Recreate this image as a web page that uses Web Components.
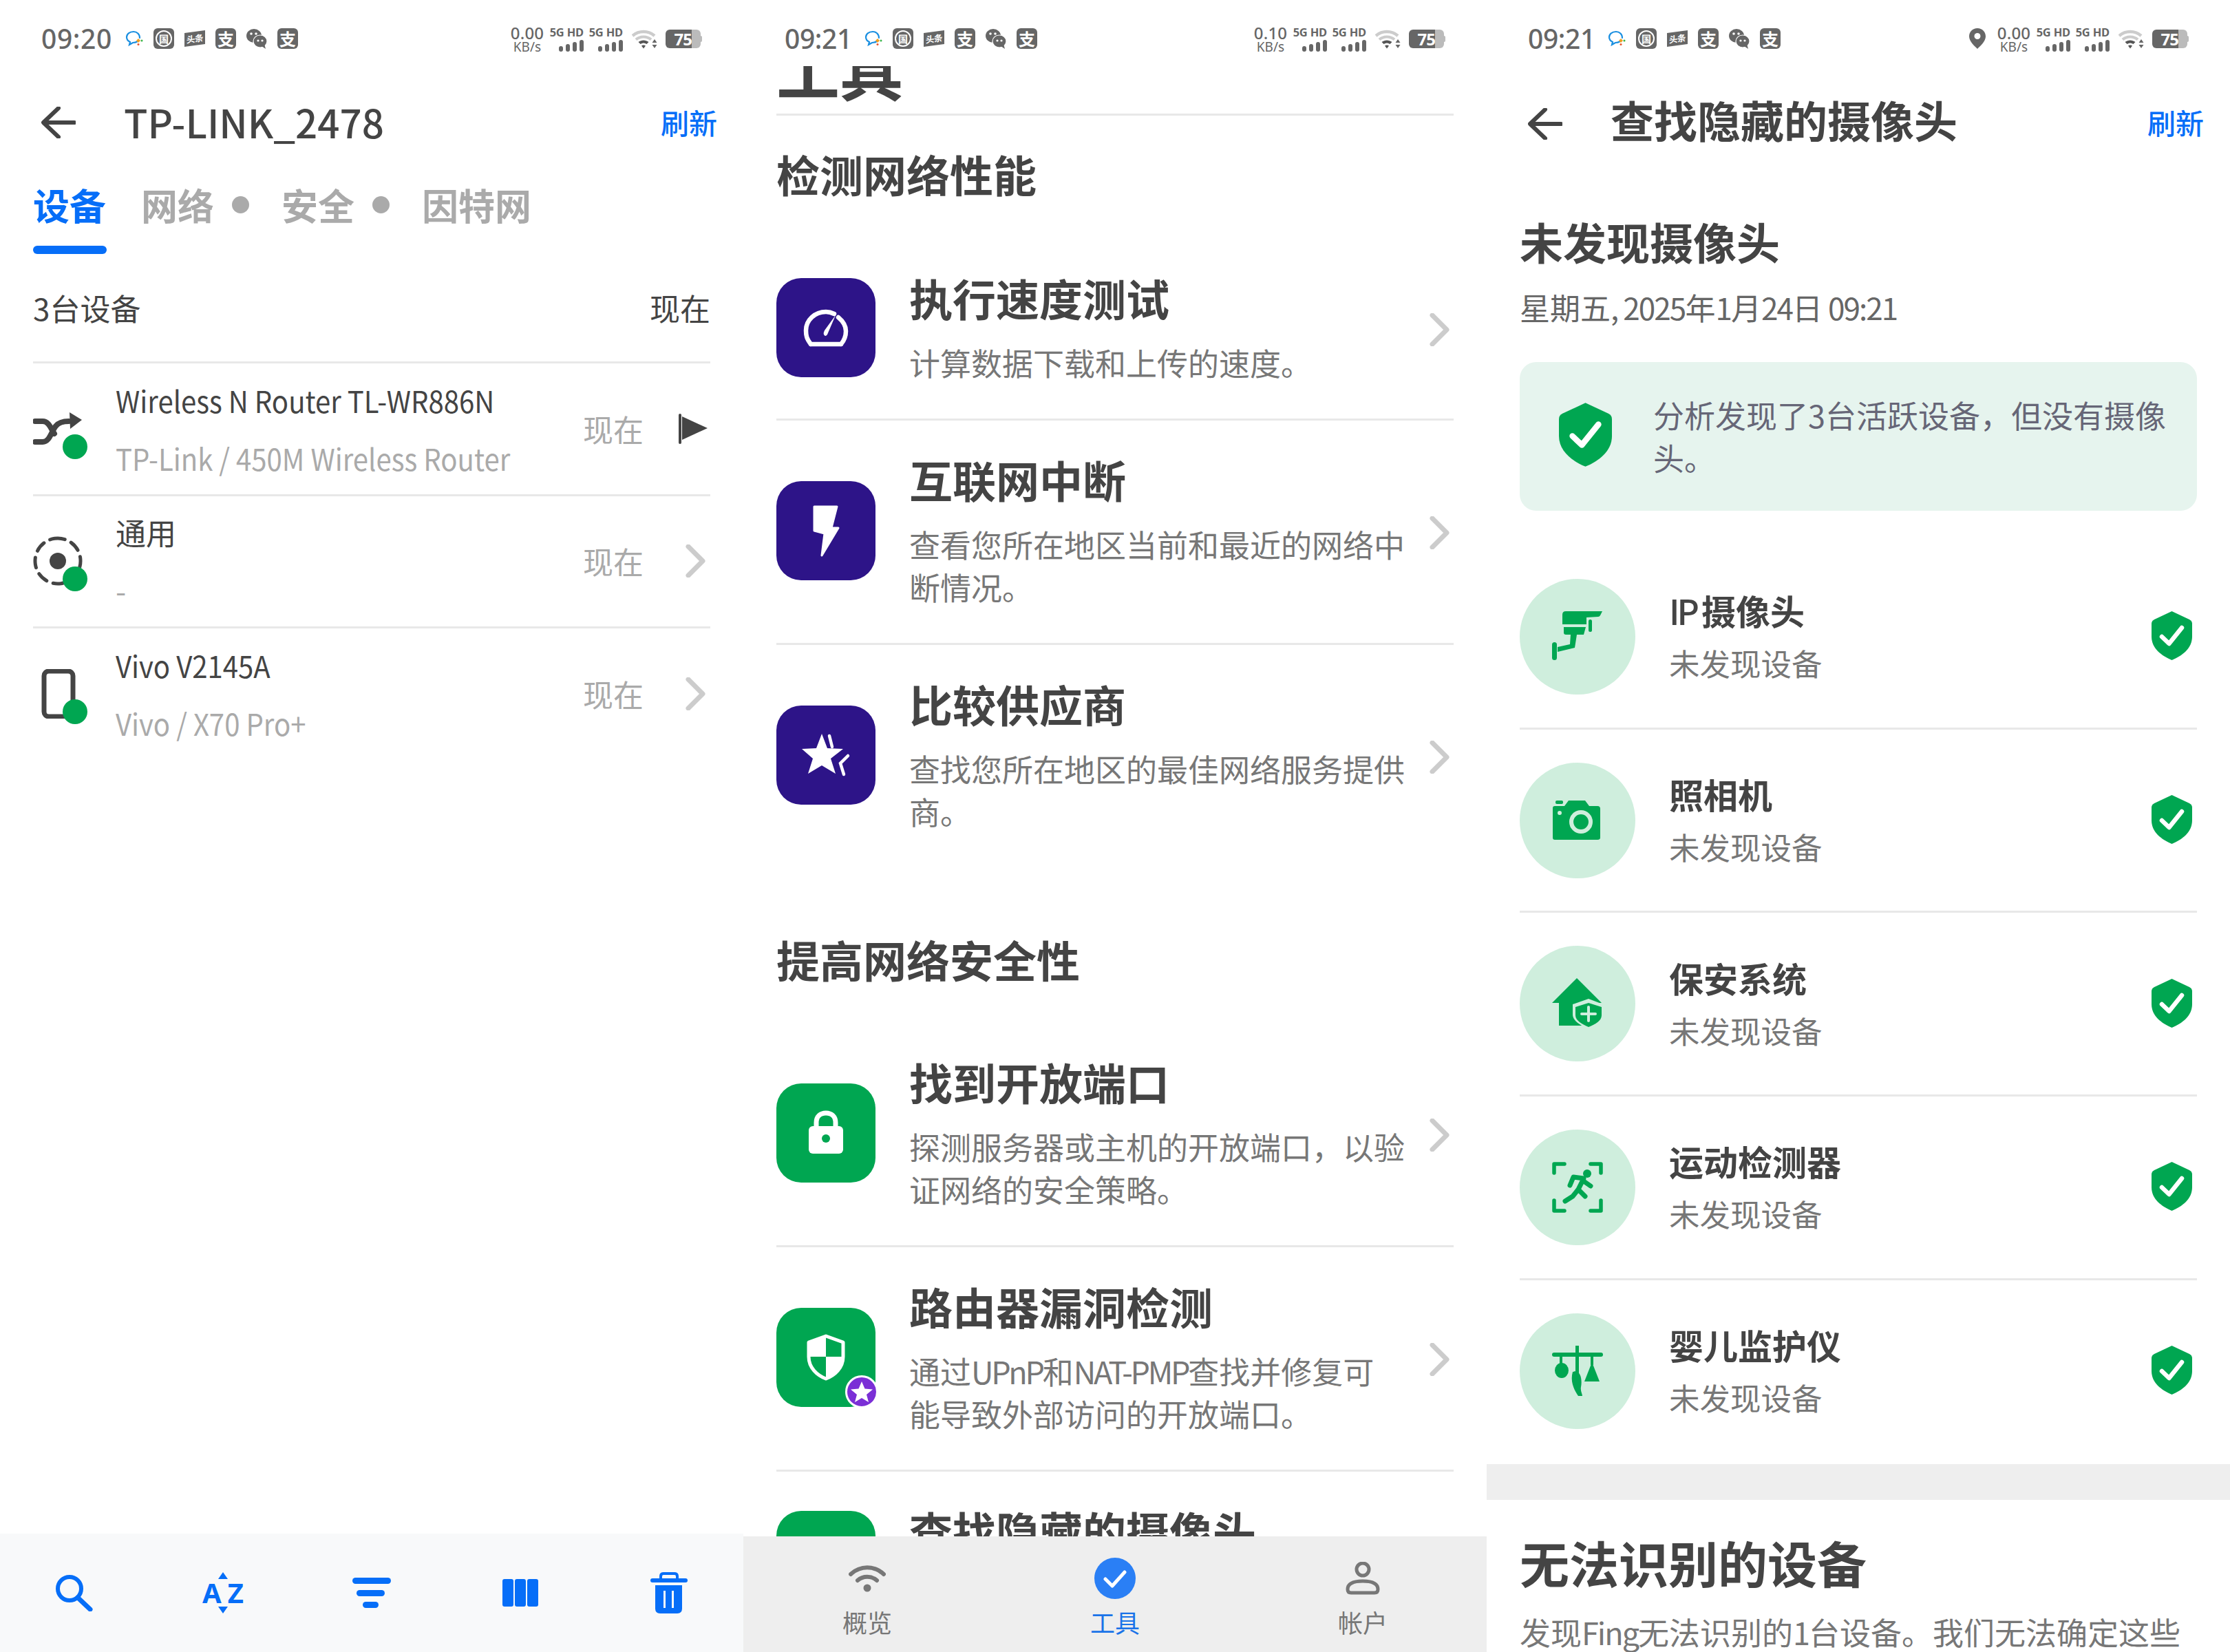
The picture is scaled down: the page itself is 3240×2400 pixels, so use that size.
<!DOCTYPE html>
<html lang="zh">
<head>
<meta charset="utf-8">
<title>Fing</title>
<style>
html,body{margin:0;padding:0;background:#fff}
body{width:3240px;height:2400px;overflow:hidden;display:grid;grid-template-columns:repeat(3,1080px);font-family:"Noto Sans CJK SC","Noto Sans",sans-serif;color:#444}
svg{display:block}
.la{letter-spacing:-3.3px}
.fi{letter-spacing:-2px}
</style>
</head>
<body>

<phone-panel>
  <status-bar time="09:20" speed="0.00"></status-bar>
  <app-header action="刷新">TP-LINK_2478</app-header>
  <device-tabs></device-tabs>
  <summary-row><span>3台设备</span><span slot="end">现在</span></summary-row>
  <device-row latin kind="shuffle" trail="flag" sub="TP-Link / 450M Wireless Router">Wireless N Router TL-WR886N</device-row>
  <device-row kind="ring" sub="-">通用</device-row>
  <device-row latin kind="phone" sub="Vivo / X70 Pro+">Vivo V2145A</device-row>
  <flex-fill></flex-fill>
  <list-toolbar></list-toolbar>
</phone-panel>

<phone-panel>
  <status-bar time="09:21" speed="0.10"></status-bar>
  <scroll-clip>
    <page-title>工具</page-title>
    <section-title>检测网络性能</section-title>
    <tool-row first kind="gauge" color="#2d1488" heading="执行速度测试">计算数据下载和上传的速度。</tool-row>
    <tool-row kind="bolt" color="#2d1488" heading="互联网中断">查看您所在地区当前和最近的网络中断情况。</tool-row>
    <tool-row kind="star" color="#2d1488" heading="比较供应商">查找您所在地区的最佳网络服务提供商。</tool-row>
    <section-title second>提高网络安全性</section-title>
    <tool-row first kind="lock" color="#00a651" heading="找到开放端口">探测服务器或主机的开放端口&#xFF0C;以验证网络的安全策略。</tool-row>
    <tool-row kind="shield" badge color="#00a651" heading="路由器漏洞检测">通过<span class="la">UPnP</span>和<span class="la">NAT-PMP</span>查找并修复可<br>能导致外部访问的开放端口。</tool-row>
    <tool-row kind="none" color="#00a651" heading="查找隐藏的摄像头">扫描网络中的隐藏摄像头。</tool-row>
  </scroll-clip>
  <main-nav></main-nav>
</phone-panel>

<phone-panel>
  <status-bar time="09:21" speed="0.00" pin></status-bar>
  <app-header action="刷新" strong>查找隐藏的摄像头</app-header>
  <result-head date="星期五<span class='l'>, 2025</span>年<span class='l'>1</span>月<span class='l'>24</span>日<span class='l'> 09:21</span>">未发现摄像头</result-head>
  <result-card>分析发现了3台活跃设备&#xFF0C;但没有摄像头。</result-card>
  <cam-row first kind="cctv" heading="<span class='l'>IP </span>摄像头">未发现设备</cam-row>
  <cam-row kind="camera" heading="照相机">未发现设备</cam-row>
  <cam-row kind="house" heading="保安系统">未发现设备</cam-row>
  <cam-row kind="runner" heading="运动检测器">未发现设备</cam-row>
  <cam-row kind="mobile" heading="婴儿监护仪">未发现设备</cam-row>
  <gray-band></gray-band>
  <unknown-devices heading="无法识别的设备">发现<span class="fi">Fing</span>无法识别的<span class="fi">1</span>台设备。我们无法确定这些</unknown-devices>
</phone-panel>

<script>
const FONT = '"Noto Sans CJK SC","Noto Sans",sans-serif';
const BLUE = '#066ef8', GREEN = '#00a651';
const SHIELD = (w,h)=>`<svg width="${w}" height="${h}" viewBox="0 0 59 71"><path d="M29.5 0 L55 12 Q59 14 59 18 V37 C59 54 44 65 29.5 71 C15 65 0 54 0 37 V18 Q0 14 4 12 Z" fill="${GREEN}"/><path d="M15 37 L25.5 47 L44 24" fill="none" stroke="#fff" stroke-width="6.5" stroke-linecap="round" stroke-linejoin="round"/></svg>`;
const CHEVRON = `<svg width="30" height="48" viewBox="0 0 30 48"><path d="M4 3 L25 24 L4 45" fill="none" stroke="#ccc" stroke-width="7" stroke-linecap="round" stroke-linejoin="round"/></svg>`;

function define(name, css, render){
  customElements.define(name, class extends HTMLElement{
    constructor(){
      super();
      this.attachShadow({mode:'open'});
    }
    connectedCallback(){
      this.shadowRoot.innerHTML = `<style>${css}</style>` + render(this);
    }
  });
}

define('phone-panel', `:host{display:flex;flex-direction:column;width:1080px;height:2400px;overflow:hidden;background:#fff;font-family:${FONT};color:#444}`, ()=>`<slot></slot>`);
define('flex-fill', `:host{display:block;flex:1}`, ()=>``);
define('gray-band', `:host{display:block;height:52px;background:#eee;margin-top:4px;flex:none}`, ()=>``);

/* status bar */
const BARS = `<svg width="36" height="17" viewBox="0 0 36 17" fill="#666"><rect x="0" y="9" width="6" height="8" rx="3"/><rect x="10" y="6" width="6" height="11" rx="3"/><rect x="20" y="3" width="6" height="14" rx="3"/><rect x="30" y="0" width="6" height="17" rx="3"/></svg>`;
define('status-bar', `
:host{display:flex;align-items:center;height:96px;flex:none;padding:16px 60px 0 60px;box-sizing:border-box;background:#fff;color:#666;position:relative;z-index:2}
.wrap{display:flex;align-items:center;height:40px}
.time{font:500 39px/40px "Noto Sans",sans-serif;margin-right:20px;letter-spacing:.6px;width:102px;white-space:nowrap}
.time.n{width:95px;margin-right:21px;letter-spacing:-.4px}
.icons{display:flex;align-items:center;gap:15px}
.b{width:30px;height:30px;border-radius:6px;background:#666;color:#fff;display:flex;align-items:center;justify-content:center;font:700 24px/1 ${FONT}}
.ring{width:24px;height:24px;border:2.5px solid #fff;border-radius:50%;display:flex;align-items:center;justify-content:center;font:700 14px/1 ${FONT};box-sizing:border-box}
.tt{width:30px;height:20px;background:#666;color:#fff;font:700 12.5px/20px ${FONT};text-align:center;transform:skewY(-8deg);letter-spacing:-.5px;white-space:nowrap;overflow:hidden}
.right{margin-left:auto;display:flex;align-items:center;height:44px}
.speed{display:flex;flex-direction:column;align-items:center;width:50px;color:#666;font-family:"Noto Sans",sans-serif}
.speed b{font-weight:500;font-size:24px;line-height:23px;letter-spacing:.2px}
.speed i{font-style:normal;font-size:19px;line-height:18px}
.sim{display:flex;flex-direction:column;align-items:flex-end;width:47px;margin-left:10px;font:700 16.5px/17px "Noto Sans",sans-serif;color:#666;white-space:nowrap;gap:3px;letter-spacing:-.2px}
.pin{margin-right:16px}
.wifi{margin-left:13px}
.bat{margin-left:12px;display:flex;align-items:center}
.bat .body{width:38px;height:27px;border-radius:6px 0 0 6px;background:#666;color:#fff;font:700 24px/27px "Noto Sans",sans-serif;letter-spacing:-1px;text-align:right;white-space:nowrap}
.bat .rest{width:13px;height:27px;background:#bbb;border-radius:0 6px 6px 0}
.bat .nub{width:2px;height:9px;background:#bbb;border-radius:0 2px 2px 0}
`, el=>{
  const t = el.getAttribute('time'), narrow = t.endsWith('1');
  return `<div class="wrap"><span class="time ${narrow?'n':''}">${t}</span><div class="icons">
    <svg width="26" height="24" viewBox="0 0 26 24"><path d="M12 2C6 2 2 5.500 2 10c0 3 2 5.500 5 7l-1 4 5-3c2 0 4 0 6-1.500M21 11C21 5.500 17 2 12 2" fill="none" stroke="#1a8fe0" stroke-width="2.200" stroke-linecap="round"/><path d="M19 12l3 3-3 3-3-3z" fill="#f0a020"/><circle cx="24" cy="15" r="1.500" fill="#39b54a"/><circle cx="19" cy="20.500" r="1.500" fill="#e8552d"/></svg>
    <span class="b"><span class="ring">国</span></span>
    <span class="tt">头条</span>
    <span class="b">支</span>
    <svg width="30" height="30" viewBox="0 0 30 30"><ellipse cx="11" cy="11" rx="11" ry="10" fill="#666"/><ellipse cx="20" cy="19" rx="10" ry="9" fill="#666" stroke="#fff" stroke-width="1.200"/><path d="M22 26l6 4-2-7z" fill="#666"/><circle cx="7" cy="8" r="1.800" fill="#fff"/><circle cx="14" cy="8" r="1.800" fill="#fff"/><circle cx="17" cy="18" r="1.600" fill="#fff"/><circle cx="23" cy="18" r="1.600" fill="#fff"/></svg>
    <span class="b">支</span>
  </div></div>
  <div class="right">
    ${el.hasAttribute('pin')?`<svg class="pin" width="24" height="30" viewBox="0 0 24 30"><path d="M12 0C5 0 0 5 0 12c0 7 8 14 12 18 4-4 12-11 12-18C24 5 19 0 12 0z" fill="#666"/><circle cx="12" cy="11.500" r="4.500" fill="#fff"/></svg>`:''}
    <div class="speed"><b>${el.getAttribute('speed')}</b><i>KB/s</i></div>
    <div class="sim"><span>5G HD</span>${BARS}</div>
    <div class="sim"><span>5G HD</span>${BARS}</div>
    <svg class="wifi" width="37" height="29" viewBox="0 0 37 29"><path d="M1 10C10 2 24 2 33 10" fill="none" stroke="#ccc" stroke-width="4.500"/><path d="M6 15.500C12 10 22 10 28 15.500" fill="none" stroke="#ccc" stroke-width="4"/><path d="M9.500 19C14 15.500 20 15.500 24.500 19l-3 3c-3-2-6-2-9 0z" fill="#555"/><path d="M14 24.500c2-1.500 4-1.500 6 0l-3 4z" fill="#555"/><path d="M33 15l3.500 5h-7zM33 28l3.500-5h-7z" fill="#666"/></svg>
    <div class="bat"><div class="body">75</div><div class="rest"></div><div class="nub"></div></div>
  </div>`;
});

/* headers */
define('app-header', `
:host{display:flex;align-items:center;height:164px;flex:none;padding:0 38px 0 60px;box-sizing:border-box;margin-top:-2px}
svg{margin-top:4px}
:host([strong]) svg{margin-top:8px}
.t{margin-left:70px;font:500 56.500px/1 ${FONT};color:#444;white-space:nowrap}
:host([strong]) .t{font-size:63px;font-weight:700;margin-bottom:8px}
.a{margin-left:auto;font:500 41px/1 ${FONT};color:${BLUE};margin-top:2px}
`, el=>`<svg width="50" height="46" viewBox="0 0 50 46"><path d="M4 23H48M25 2L3 23L25 44" fill="none" stroke="#444" stroke-width="6" stroke-linecap="round" stroke-linejoin="round"/></svg>
<span class="t"><slot></slot></span><span class="a">${el.getAttribute('action')}</span>`);

define('device-tabs', `
:host{display:flex;height:111px;flex:none;padding-left:48px;box-sizing:border-box}
.tab{display:flex;flex-direction:column;font:700 53px/78px ${FONT};color:#aaa;white-space:nowrap}
.tab.on{color:${BLUE};width:107px;margin-right:50px}
.tab.on i{display:block;height:12px;border-radius:6px;background:${BLUE};margin-top:21px}
.row{display:flex;align-items:center}
.d{width:25px;height:25px;border-radius:50%;background:#aaa;margin:0 47px 0 26px}
`, ()=>`<div class="tab on">设备<i></i></div>
<div class="tab"><div class="row">网络<span class="d"></span></div></div>
<div class="tab"><div class="row">安全<span class="d"></span></div></div>
<div class="tab"><div class="row">因特网</div></div>`);

define('summary-row', `
:host{display:flex;align-items:center;justify-content:space-between;height:156px;flex:none;margin:0 48px;font:400 44px/1 ${FONT};color:#444}
`, ()=>`<slot></slot><slot name="end"></slot>`);

const DEV = {
 shuffle:`<svg width="72" height="50" viewBox="0 0 72 50"><path d="M3 14H14C23 14 26 25 31 32M3 44H14C24 44 26 30 33 21C37 16 42 14 52 14" fill="none" stroke="#444" stroke-width="8" stroke-linecap="round"/><path d="M53 1L71 12L54 25Z" fill="#444"/></svg>`,
 ring:`<svg width="72" height="72" viewBox="0 0 72 72"><circle cx="36" cy="36" r="33" fill="none" stroke="#444" stroke-width="5" stroke-dasharray="15 10" stroke-linecap="round" transform="rotate(-98 36 36)"/><circle cx="36" cy="36" r="12" fill="#444"/></svg>`,
 phone:`<svg width="72" height="72" viewBox="0 0 72 72"><rect x="16" y="3" width="42" height="66" rx="7" fill="none" stroke="#444" stroke-width="7"/></svg>`
};
define('device-row', `
:host{display:flex;align-items:center;height:192.5px;flex:none;margin:0 48px;border-top:3px solid #e8e8e8;box-sizing:border-box}
.ic{position:relative;width:72px;height:72px;flex:none;display:flex;align-items:center;justify-content:center;margin-right:48px}
.dot{position:absolute;left:43px;top:44px;width:36px;height:36px;border-radius:50%;background:${GREEN}}
.txt{flex:1;min-width:0;font-family:${FONT}}
.t{font-size:44px;line-height:56px;color:#444;white-space:nowrap}
.s{font-size:44px;line-height:56px;color:#aaa;margin-top:28px;white-space:nowrap}
:host([latin]) .t,:host([latin]) .s{transform:scaleX(.912);transform-origin:left center}
.m{font-size:44px;color:#aaa;margin-right:49px;line-height:1}
.e{width:48px;flex:none;display:flex;justify-content:flex-end;padding-right:6px;box-sizing:border-box}
.e.f{padding-right:4px}
`, el=>`<div class="ic">${DEV[el.getAttribute('kind')]}<span class="dot"></span></div>
<div class="txt"><div class="t"><slot></slot></div><div class="s">${el.getAttribute('sub')}</div></div>
<span class="m">现在</span>
<div class="e ${el.getAttribute('trail')==='flag'?'f':''}">${el.getAttribute('trail')==='flag'?`<svg width="42" height="44" viewBox="0 0 42 44"><rect x="0" y="0" width="4" height="44" rx="2" fill="#444"/><path d="M5 4L42 21L5 38Z" fill="#444"/></svg>`:CHEVRON}</div>`);

define('list-toolbar', `
:host{display:flex;height:172px;flex:none;background:#f8f9fa;justify-content:space-around;align-items:center}
.c{width:216px;display:flex;justify-content:center}
text{font:700 40px "Noto Sans",sans-serif;fill:${BLUE}}
`, ()=>`
<div class="c"><svg width="54" height="54" viewBox="0 0 54 54"><circle cx="20" cy="21" r="17" fill="none" stroke="${BLUE}" stroke-width="6"/><path d="M32 34L50 51" stroke="${BLUE}" stroke-width="7" stroke-linecap="round"/></svg></div>
<div class="c"><svg width="60" height="60" viewBox="0 0 60 60"><path d="M30 0L37 10H23ZM30 60L37 50H23Z" fill="${BLUE}"/><text x="0" y="45" textLength="60">AZ</text></svg></div>
<div class="c"><svg width="56" height="44" viewBox="0 0 56 44" fill="${BLUE}"><rect width="56" height="9" rx="4.500"/><rect x="6" y="18" width="41" height="9" rx="4.500"/><rect x="15" y="35" width="23" height="9" rx="4.500"/></svg></div>
<div class="c"><svg width="52" height="40" viewBox="0 0 52 40" fill="${BLUE}"><rect width="16" height="40" rx="3"/><rect x="18" width="16" height="40" rx="3"/><rect x="36" width="16" height="40" rx="3"/></svg></div>
<div class="c"><svg width="54" height="60" viewBox="0 0 54 60" fill="${BLUE}"><path d="M15 11V6Q15 2 19 2H35Q39 2 39 6V11" fill="none" stroke="${BLUE}" stroke-width="4"/><rect y="9" width="54" height="6" rx="3"/><path d="M7 19H46V53Q46 60 39 60H14Q7 60 7 53Z"/><rect x="19" y="27" width="3" height="25" fill="#f8f9fa"/><rect x="31" y="27" width="3" height="25" fill="#f8f9fa"/></svg></div>`);

/* tools page */
define('scroll-clip', `:host{display:block;flex:1;min-height:0;overflow:hidden;padding:0 48px}`, ()=>`<slot></slot>`);
define('page-title', `
:host{display:block;margin-top:-43px;padding-bottom:20px;border-bottom:3px solid #e8e8e8;font:700 92px/92px ${FONT};color:#444}
`, ()=>`<slot></slot>`);
define('section-title', `
:host{display:block;font:700 63px/64px ${FONT};color:#444;margin-top:52px;margin-bottom:116px}
:host([second]){margin-top:101px;margin-bottom:114px}
`, ()=>`<slot></slot>`);

const TOOL = {
 gauge:`<svg width="144" height="144" viewBox="0 0 144 144"><path d="M50 96H94M50 96C44 88 43 84 43 76C43 61 56 49 72 49C78 49 82 51 84 52M90 57C96 62 101 69 101 77C101 84 99 90 94 96" fill="none" stroke="#fff" stroke-width="6.500" stroke-linecap="round"/><path d="M86 54L74 82Q71 86 69 82Q68 80 70 76Z" fill="#fff"/></svg>`,
 bolt:`<svg width="144" height="144" viewBox="0 0 144 144"><path d="M55 37H88L80 68H90L66 108L70 76L55 72Z" fill="#fff" stroke="#fff" stroke-width="3" stroke-linejoin="round"/></svg>`,
 star:`<svg width="144" height="144" viewBox="0 0 144 144"><path d="M66 41L74 62L97 63L79 77L86 99L66 87L46 99L53 77L37 63L58 62Z" fill="#fff"/><path d="M77 44L81 60M104 73L93 84L98 100" fill="none" stroke="#fff" stroke-width="4.500" stroke-linecap="round"/></svg>`,
 lock:`<svg width="144" height="144" viewBox="0 0 144 144"><path d="M58 66V57C58 48 64 43 72 43C80 43 86 48 86 57V66" fill="none" stroke="#fff" stroke-width="7"/><rect x="47" y="62" width="50" height="40" rx="6" fill="#fff"/><circle cx="72" cy="80" r="6" fill="${GREEN}"/></svg>`,
 shield:`<svg width="144" height="144" viewBox="0 0 144 144"><path d="M72 41L97 50V71C97 87 85 98 72 103C59 98 47 87 47 71V50Z" fill="${GREEN}" stroke="#fff" stroke-width="5" stroke-linejoin="round"/><path d="M72 41L47 50V71H72ZM72 71H97C97 87 85 98 72 103Z" fill="#fff"/></svg>`,
 none:``
};
define('tool-row', `
:host{display:flex;align-items:center;border-top:3px solid #e8e8e8;padding:53px 0 50px;flex:none;position:relative}
:host([first]){border-top:none;padding-top:0}
.ic{position:relative;width:144px;height:144px;border-radius:36px;flex:none;margin-right:49px;margin-bottom:6px}
.badge{position:absolute;right:-4px;bottom:-2px}
.txt{flex:1;min-width:0;font-family:${FONT};padding-right:27px;box-sizing:border-box;width:0}
.t{font:700 63px/64px ${FONT};color:#444;white-space:nowrap}
.d{font:400 45px/62px ${FONT};color:#777;margin-top:32px}
.e{width:34px;flex:none;display:flex;justify-content:flex-end;padding-right:5px}
`, el=>`<div class="ic" style="background:${el.getAttribute('color')}">${TOOL[el.getAttribute('kind')]}${el.hasAttribute('badge')?`<svg class="badge" width="48" height="48" viewBox="0 0 48 48"><circle cx="24" cy="24" r="22.500" fill="#7b2fd6" stroke="#fff" stroke-width="3"/><path d="M24 9L28.500 19.500L40 20.500L31 28L34 39L24 33L14 39L17 28L8 20.500L19.500 19.500Z" fill="#fff"/></svg>`:''}</div>
<div class="txt"><div class="t">${el.getAttribute('heading')}</div><div class="d"><slot></slot></div></div>
<div class="e">${CHEVRON}</div>`);

define('main-nav', `
:host{display:flex;height:168px;flex:none;background:#eee;position:relative;z-index:2}
.n{flex:1;display:flex;flex-direction:column;align-items:center;font:400 36px/1 ${FONT};color:#777}
.n.on{color:#1a73e8}
.i{height:62px;margin-top:30px;margin-bottom:14px;display:flex;align-items:center;justify-content:center}
`, ()=>`
<div class="n"><div class="i"><svg width="54" height="40" viewBox="0 0 54 40"><path d="M3 14C17 1 37 1 51 14" fill="none" stroke="#777" stroke-width="6" stroke-linecap="round"/><path d="M13 23C21 16 33 16 41 23" fill="none" stroke="#777" stroke-width="6" stroke-linecap="round"/><circle cx="27" cy="34" r="5.500" fill="#777"/></svg></div>概览</div>
<div class="n on"><div class="i"><svg width="60" height="60" viewBox="0 0 60 60"><circle cx="30" cy="30" r="30" fill="#2a7ff5"/><path d="M16 31L26 41L44 21" fill="none" stroke="#fff" stroke-width="5" stroke-linecap="round" stroke-linejoin="round"/></svg></div>工具</div>
<div class="n"><div class="i"><svg width="50" height="48" viewBox="0 0 50 48"><circle cx="25" cy="11" r="9" fill="none" stroke="#777" stroke-width="5"/><path d="M3 40C3 30 14 28 25 28C36 28 47 30 47 40Q47 45 42 45H8Q3 45 3 40Z" fill="none" stroke="#777" stroke-width="5"/></svg></div>帐户</div>`);

/* hidden camera page */
define('result-head', `
:host{display:block;flex:none;margin:52px 48px 0;font-family:${FONT}}
.t{font:700 63px/80px ${FONT};color:#444}
.d{font:400 44px/60px ${FONT};color:#666;margin-top:26px;white-space:pre}
.l{letter-spacing:-1.9px}
`, el=>`<div class="t"><slot></slot></div><div class="d">${el.getAttribute('date')}</div>`);

define('result-card', `
:host{display:flex;align-items:center;flex:none;height:216px;margin:50px 48px 48px;background:#e6f4ee;border-radius:24px;padding:0 44px 0 57px;box-sizing:border-box}
.s{flex:none;margin-right:60px}
.x{font:400 45px/62px ${FONT};color:#667}
`, ()=>`<div class="s">${SHIELD(77,93)}</div><div class="x"><slot></slot></div>`);

const CAM = {
 cctv:`<svg width="74" height="74" viewBox="0 0 74 74" fill="${GREEN}"><path d="M15 5Q15 0 20 0H73L70 6Q69 8 67 8L50 9V19H15Z"/><path d="M17 23H49L46 34H20Q17 34 17 31Z"/><rect x="53" y="12" width="5" height="18" rx="2.500"/><path d="M27 34H36L33 53L8 59V52L26 48Z"/><rect x="0" y="45" width="7" height="26" rx="3.500"/></svg>`,
 camera:`<svg width="74" height="74" viewBox="0 0 74 74"><path d="M4 16H18L24 8H48L54 16H66Q70 16 70 20V62Q70 65 66 65H4Q1 65 1 62V19Q1 16 4 16Z" fill="${GREEN}"/><rect x="5" y="8" width="11" height="5" rx="2" fill="${GREEN}"/><circle cx="42" cy="39" r="14" fill="none" stroke="#cfeedd" stroke-width="6"/><circle cx="11" cy="26" r="3" fill="#cfeedd"/></svg>`,
 house:`<svg width="74" height="74" viewBox="0 0 74 74"><path d="M36 0L72 36H60V69H10V36H0Z" fill="${GREEN}"/><path d="M53 30L74 38V53C74 62 65 69 53 74C42 69 30 62 30 53V38Z" fill="#cfeedd"/><path d="M53 36L72 42V54C72 62 63 67 53 71C44 67 34 62 34 54V42Z" fill="${GREEN}"/><path d="M53 42V62M43 52H63" stroke="#cfeedd" stroke-width="4" stroke-linecap="round"/></svg>`,
 runner:`<svg width="74" height="74" viewBox="0 0 74 74" fill="none" stroke="${GREEN}" stroke-width="5.500" stroke-linecap="round" stroke-linejoin="round"><path d="M3 16V3H18M56 3H71V16M3 56V71H18M56 71H71V56"/><circle cx="51" cy="17" r="6" fill="${GREEN}" stroke="none"/><path d="M26 34L31 22L46 24L38 40L48 50M38 40L30 50L19 57M46 28L56 35" stroke-width="7"/></svg>`,
 mobile:`<svg width="74" height="74" viewBox="0 0 74 74" fill="${GREEN}"><rect x="0" y="10" width="74" height="6" rx="3"/><rect x="34" y="0" width="5" height="40"/><rect x="11" y="14" width="4" height="14"/><rect x="56" y="14" width="4" height="14"/><ellipse cx="14" cy="36" rx="10" ry="11"/><path d="M58 24L69 52H47Z"/><path d="M30 38C42 34 44 50 42 60C41 66 44 70 44 73H38C32 64 26 52 30 38Z"/></svg>`
};
define('cam-row', `
:host{display:flex;align-items:center;height:266.7px;flex:none;margin:0 48px;border-top:3px solid #e8e8e8;box-sizing:border-box}
:host([first]){border-top-color:transparent}
.c{width:168px;height:168px;border-radius:50%;background:#cfeedd;flex:none;margin-right:49px;display:flex;align-items:center;justify-content:center}
.x{flex:1;font-family:${FONT}}
.t{font:700 50px/60px ${FONT};color:#444;white-space:pre}
.l{letter-spacing:-4px;font-weight:500}
.d{font:400 44.500px/60px ${FONT};color:#777;margin-top:17px}
.s{flex:none;margin-right:7px;margin-top:3px}
`, el=>`<div class="c">${CAM[el.getAttribute('kind')]}</div>
<div class="x"><div class="t">${el.getAttribute('heading')}</div><div class="d"><slot></slot></div></div>
<div class="s">${SHIELD(59,71)}</div>`);

define('unknown-devices', `
:host{display:block;flex:none;margin:0 48px;padding-top:50px;font-family:${FONT}}
.t{font:700 72px/80px ${FONT};color:#444}
.d{font:400 45px/62px ${FONT};color:#777;margin-top:31px}
`, el=>`<div class="t">${el.getAttribute('heading')}</div><div class="d"><slot></slot></div>`);
</script>
</body>
</html>
